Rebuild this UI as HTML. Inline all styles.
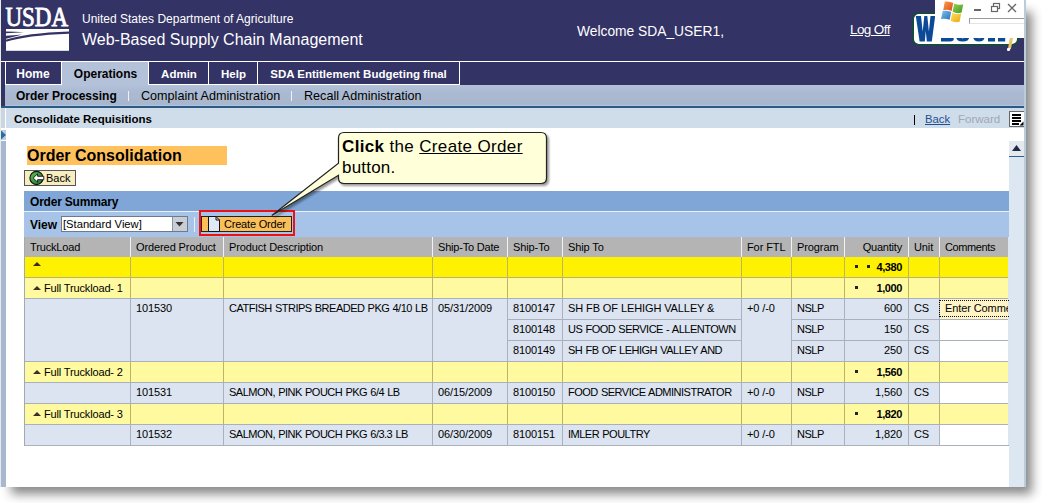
<!DOCTYPE html>
<html><head><meta charset="utf-8">
<style>
*{box-sizing:border-box;margin:0;padding:0}
html,body{width:1042px;height:503px;overflow:hidden;background:#fff;font-family:"Liberation Sans",sans-serif;color:#000}
.a{position:absolute;white-space:nowrap}
#win{position:absolute;left:0;top:0;width:1026px;height:487px;background:#fff;box-shadow:8.5px 9px 10px -2.5px rgba(0,0,0,.47);overflow:hidden}
.hdr{left:1px;top:0;width:1025px;height:61px;background:#333366}
.t{color:#fff}
.tabbar{left:1px;top:61px;width:1025px;height:46px;background:#333366}
.tab{position:absolute;top:62px;height:23px;background:#333366;border-left:1px solid #fff;color:#fff;font-weight:bold;font-size:12px;line-height:24px;text-align:center;border-bottom:1px solid #fff}
.sub{left:5px;top:85px;width:1021px;height:21px;background:linear-gradient(#b3c1d9,#abbbd3 30%,#a9b6cc 95%)}
.subline{left:1px;top:106px;width:1025px;height:2px;background:#2c5a82}
.title{left:5px;top:108px;width:1021px;height:20px;background:#cfdcea}
.lstrip{left:1px;width:4px}
.col{position:absolute;top:237px;height:209px;border-right:1px solid #b9b9b9}
.row{position:absolute;left:25px;width:983px;height:21px;border-bottom:1px solid #c3c3aa}
.cell{position:absolute;font-size:11px;line-height:20px;white-space:nowrap}
</style></head><body>
<div id="win">
  <!-- left frame col -->
  <div class="a" style="left:0;top:0;width:1px;height:487px;background:#e6ebe6"></div>
  <div class="a hdr"></div>
  <!-- USDA logo -->
  <svg class="a" style="left:0;top:0" width="80" height="56" viewBox="0 0 80 56">
    <text x="5.5" y="26.4" font-family="Liberation Serif" font-size="27" fill="#fff" stroke="#fff" stroke-width="0.9" textLength="62.5" lengthAdjust="spacingAndGlyphs">USDA</text>
    <rect x="6" y="29" width="63" height="21.8" fill="#fff"/>
    <path d="M6,31.5 L6,33.2 Q15,33 24,32.3 Q15,31.6 6,31.5 Z" fill="#333366"/>
    <path d="M6,35.8 L6,38.8 Q13,37.2 22,34.6 Q13,35.6 6,35.8 Z" fill="#333366"/>
    <path d="M6,40.8 Q26,34.2 69,32.6" stroke="#333366" stroke-width="2.1" fill="none"/>
  </svg>
  <div class="a t" style="left:82px;top:12px;font-size:12px">United States Department of Agriculture</div>
  <div class="a t" style="left:82px;top:31px;font-size:16px">Web-Based Supply Chain Management</div>
  <div class="a t" style="left:577px;top:24px;font-size:13.8px">Welcome SDA_USER1,</div>
  <div class="a t" style="left:850px;top:22px;font-size:13.5px;letter-spacing:-0.6px;text-decoration:underline">Log Off</div>
  <!-- WBSCM logo -->
  <div class="a" style="left:912px;top:12px;width:107px;height:34px;background:#fff;border:2px solid #174a3c;border-radius:7px"></div>
  <svg class="a" style="left:900px;top:0" width="126" height="56" viewBox="900 0 126 56">
    <path d="M915.8,16 L921,16 L922.7,31.5 L924.3,16 L927.3,16 L928.9,31.5 L930.5,16 L935.2,16 L931.8,41.5 L926.8,41.5 L925.8,31 L924.8,41.5 L919.6,41.5 Z" fill="#0c4a98"/>
    <path d="M941,36 H950 Q953.8,36 953.8,38.8 Q953.8,41.5 950,41.5 H941 Z" fill="#0c4a98"/>
    <path d="M955.8,36 Q956,41.6 962.6,41.6 Q969.6,41.6 969.6,36 H964.6 Q964.4,38.4 962.6,38.4 Q960.9,38.4 960.7,36 Z" fill="#0c4a98"/>
    <path d="M972.8,36 Q973.2,41.6 979,41.6 Q984.2,41.6 984.6,37 L980,36.5 Q979.8,38.4 979,38.4 Q977.8,38.4 977.6,36 Z" fill="#0c4a98"/>
    <path d="M988,36 H995 V41.5 H988 Z M998,36 H1005.2 V41.5 H998 Z" fill="#0c4a98"/>
  </svg>
  <div class="a" style="left:1009px;top:37px;width:2.5px;height:12px;background:#e8c36a;transform:rotate(10deg)"></div>
  <div class="a" style="left:1007px;top:48px;width:3px;height:3px;background:#fff;border-radius:1px"></div>
  <!-- window chrome overlay -->
  <div class="a" style="left:935px;top:0;width:91px;height:38px;background:#fff"></div>
  <svg class="a" style="left:930px;top:0" width="40" height="26" viewBox="930 0 40 26">
    <defs>
      <linearGradient id="wr" x1="0" y1="0" x2="1" y2="1"><stop offset="0" stop-color="#f7a04a"/><stop offset="1" stop-color="#e0481f"/></linearGradient>
      <linearGradient id="wg" x1="0" y1="0" x2="1" y2="1"><stop offset="0" stop-color="#9ad24a"/><stop offset="1" stop-color="#3f9a2a"/></linearGradient>
      <linearGradient id="wb" x1="0" y1="0" x2="1" y2="1"><stop offset="0" stop-color="#7cc4f4"/><stop offset="1" stop-color="#2a6fb4"/></linearGradient>
      <linearGradient id="wy" x1="0" y1="0" x2="1" y2="1"><stop offset="0" stop-color="#ffe05a"/><stop offset="1" stop-color="#e8a818"/></linearGradient>
    </defs>
    <path d="M944.8,1.6 Q949,0.8 953.2,3 L951.6,11 Q947.5,9.2 943.2,10.2 Z" fill="url(#wr)"/>
    <path d="M954.2,3.6 Q958.5,5.6 963.2,4.2 L961.6,12.6 Q957,14 952.6,11.8 Z" fill="url(#wg)"/>
    <path d="M942.8,11 Q947,10 951.2,12 L949.6,19.8 Q945.5,18.2 941,19 Z" fill="url(#wb)"/>
    <path d="M952.2,12.8 Q956.6,15 961.2,13.6 L959.6,21.8 Q955,23 950.6,20.8 Z" fill="url(#wy)"/>
  </svg>
  <div class="a" style="left:974px;top:9px;width:7px;height:2px;background:#666"></div>
  <svg class="a" style="left:990px;top:2px" width="11" height="11" viewBox="0 0 11 11">
    <rect x="3.5" y="1.5" width="6" height="5" fill="none" stroke="#666" stroke-width="1.2"/>
    <rect x="1.5" y="4.5" width="6" height="5" fill="#fff" stroke="#666" stroke-width="1.2"/>
  </svg>
  <svg class="a" style="left:1007px;top:3px" width="10" height="10" viewBox="0 0 10 10">
    <path d="M1,1 L9,9 M9,1 L1,9" stroke="#666" stroke-width="1.3"/>
  </svg>
  <div class="a" style="left:969px;top:18px;width:57px;height:6px;border-top:1px solid #999;border-left:1px solid #999;border-bottom:1px solid #e4e4e4"></div>

  <!-- tab bar -->
  <div class="a tabbar"></div>
  <div class="a" style="left:1px;top:61px;width:1025px;height:1px;background:#fff"></div>
  <div class="a lstrip" style="top:62px;height:46px;background:#333366"></div>
  <div class="a" style="left:5px;top:62px;width:1px;height:44px;background:#fff"></div>
  <div class="tab" style="left:5px;width:57px;padding-right:2px">Home</div>
  <div class="tab" style="left:61px;width:88px;background:#b3c1d9;color:#000;border-bottom:none;height:24px">Operations</div>
  <div class="tab" style="left:148px;width:61px;font-size:11.5px">Admin</div>
  <div class="tab" style="left:208px;width:50px;font-size:11.5px">Help</div>
  <div class="tab" style="left:257px;width:203px;font-size:11.5px;border-right:1px solid #fff">SDA Entitlement Budgeting final</div>
  <div class="a sub"></div>
  <div class="a" style="left:62px;top:84px;width:86px;height:2px;background:#b3c1d9"></div>
  <div class="a" style="left:5px;top:105px;width:1021px;height:1px;background:#a9c6e4"></div>
  <div class="a subline"></div>
  <div class="a" style="left:16px;top:89px;font-size:12px;font-weight:bold">Order Processing</div>
  <div class="a" style="left:128px;top:91px;width:1px;height:10px;background:#eef2f8"></div>
  <div class="a" style="left:141px;top:89px;font-size:12.6px">Complaint Administration</div>
  <div class="a" style="left:291px;top:91px;width:1px;height:10px;background:#eef2f8"></div>
  <div class="a" style="left:304px;top:89px;font-size:12.6px">Recall Administration</div>
  <!-- title bar -->
  <div class="a title"></div>
  <div class="a lstrip" style="top:108px;height:20px;background:#c9d5e3"></div>
  <div class="a" style="left:5px;top:108px;width:1px;height:20px;background:#fff"></div>
  <div class="a" style="left:14px;top:113px;font-size:11.5px;font-weight:bold">Consolidate Requisitions</div>
  <div class="a" style="left:914px;top:115px;width:1px;height:10px;background:#000"></div>
  <div class="a" style="left:925px;top:113px;font-size:11.3px;color:#1d4f91;text-decoration:underline">Back</div>
  <div class="a" style="left:958px;top:113px;font-size:11.5px;color:#a0a8b4">Forward</div>
  <div class="a" style="left:1009px;top:111px;width:17px;height:16px;background:#fff;border:1px solid #666"></div>
  <div class="a" style="left:1012px;top:114px;width:9px;height:1.5px;background:#000"></div>
  <div class="a" style="left:1012px;top:117px;width:9px;height:1.5px;background:#000"></div>
  <div class="a" style="left:1012px;top:120px;width:9px;height:1.5px;background:#000"></div>
  <div class="a" style="left:1012px;top:123px;width:7px;height:1.5px;background:#000"></div>
  <svg class="a" style="left:1019px;top:121px" width="5" height="5" viewBox="0 0 5 5"><path d="M4.5,0.5 L4.5,4.5 L0.5,4.5 Z" fill="#000"/></svg>

  <!-- left strip below -->
  <div class="a" style="left:1px;top:130px;width:5px;height:10px;background:#b9cbe2"></div>
  <svg class="a" style="left:1px;top:130px" width="5" height="10" viewBox="0 0 5 10"><path d="M0,0.5 L5,5 L0,9.5 Z" fill="#2f6aa3"/></svg>
  <div class="a" style="left:1px;top:141px;width:5px;height:346px;background:linear-gradient(90deg,#a6b7d4,#aab8cc)"></div>

  <!-- right scrollbar -->
  <div class="a" style="left:1009px;top:141px;width:15px;height:346px;background:#dce7f2"></div>
  <div class="a" style="left:1009px;top:141px;width:15px;height:15px;background:#e4e9f0"></div>
  <svg class="a" style="left:1009px;top:141px" width="15" height="15" viewBox="0 0 15 15"><path d="M3,10 L12,10 L7.5,4 Z" fill="#222844"/></svg>
  <div class="a" style="left:1009px;top:156px;width:15px;height:1px;background:#2f5f8f"></div>
  <div class="a" style="left:1024px;top:0;width:2px;height:487px;background:#bccade"></div>

  <!-- page title -->
  <div class="a" style="left:27px;top:146px;width:200px;height:19px;background:#ffc15c"></div>
  <div class="a" style="left:27px;top:146px;font-size:16px;font-weight:bold;line-height:19px">Order Consolidation</div>
  <!-- back button -->
  <div class="a" style="left:24px;top:170px;width:52px;height:16px;background:#f8edc0;border:1px solid #555"></div>
  <svg class="a" style="left:29px;top:170px" width="16" height="16" viewBox="0 0 16 16">
    <defs><linearGradient id="gb" x1="0" y1="0" x2="1" y2="1"><stop offset="0" stop-color="#5cc24a"/><stop offset="1" stop-color="#1d6e3a"/></linearGradient></defs>
    <circle cx="7.5" cy="8" r="6.6" fill="url(#gb)" stroke="#111" stroke-width="1.1"/>
    <path d="M4.2,8 L8.6,3.8 L8.6,6.3 L14.8,6.3 L14.8,9.7 L8.6,9.7 L8.6,12.2 Z" fill="#fff" stroke="#111" stroke-width="0.9"/>
  </svg>
  <div class="a" style="left:46px;top:171px;font-size:11px;line-height:14px">Back</div>

  <!-- order summary bar -->
  <div class="a" style="left:24px;top:191px;width:985px;height:20px;background:#7fa6d6"></div>
  <div class="a" style="left:30px;top:195px;font-size:12px;font-weight:bold;letter-spacing:-0.2px">Order Summary</div>
  <div class="a" style="left:24px;top:211px;width:985px;height:1px;background:#e8f0fa"></div>
  <div class="a" style="left:24px;top:212px;width:985px;height:25px;background:#a7c3e7"></div>
  <div class="a" style="left:30px;top:218px;font-size:12px;font-weight:bold">View</div>
  <div class="a" style="left:61px;top:216px;width:127px;height:16px;background:#fff;border:1px solid #6f7a88"></div>
  <div class="a" style="left:172px;top:217px;width:15px;height:14px;background:#c9ced6;border-left:1px solid #8a96a6"></div>
  <svg class="a" style="left:172px;top:217px" width="15" height="14" viewBox="0 0 15 14"><path d="M3.5,5 L11.5,5 L7.5,9.5 Z" fill="#333"/></svg>
  <div class="a" style="left:63px;top:217px;font-size:11.2px;line-height:14px">[Standard View]</div>
  <div class="a" style="left:194px;top:217px;width:1px;height:15px;background:#e8f0fa"></div>
  <!-- red box -->
  <div class="a" style="left:199px;top:210px;width:96px;height:26px;border:2px solid #ee1111"></div>
  <div class="a" style="left:201px;top:216px;width:91px;height:16px;background:#fbbf5a;border:1px solid #222"></div>
  <svg class="a" style="left:207px;top:216px" width="14" height="16" viewBox="0 0 14 16">
    <path d="M1.5,0.5 L9,0.5 L12.5,4 L12.5,15.5 L1.5,15.5 Z" fill="#dfe9f5" stroke="#111" stroke-width="1"/>
    <path d="M9,0.5 L9,4 L12.5,4" fill="none" stroke="#111" stroke-width="1"/>
  </svg>
  <div class="a" style="left:224px;top:217px;font-size:11px;letter-spacing:-0.2px;line-height:14px">Create Order</div>

  <!-- table -->
  <div class="a" style="left:24px;top:237px;width:985px;height:209px;background:#dce6f2;border:1px solid #a4a8b0;border-top:none;border-right:none"></div>
  <div class="a" style="left:25px;top:237px;width:983px;height:20px;background:#b4b4b4"></div>
  <div class="a" style="left:25px;top:237px;width:983px;height:20px;background:#b4b4b4"></div>
<div class="a" style="left:30px;top:237px;height:20px;font-size:11px;line-height:20px;letter-spacing:-0.15px">TruckLoad</div>
<div class="a" style="left:130px;top:237px;width:1px;height:20px;background:#f2f2f2"></div>
<div class="a" style="left:136px;top:237px;height:20px;font-size:11px;line-height:20px;letter-spacing:-0.1px">Ordered Product</div>
<div class="a" style="left:223px;top:237px;width:1px;height:20px;background:#f2f2f2"></div>
<div class="a" style="left:229px;top:237px;height:20px;font-size:11px;line-height:20px;letter-spacing:-0.1px">Product Description</div>
<div class="a" style="left:432px;top:237px;width:1px;height:20px;background:#f2f2f2"></div>
<div class="a" style="left:438px;top:237px;height:20px;font-size:11px;line-height:20px;letter-spacing:-0.2px">Ship-To Date</div>
<div class="a" style="left:507px;top:237px;width:1px;height:20px;background:#f2f2f2"></div>
<div class="a" style="left:513px;top:237px;height:20px;font-size:11px;line-height:20px;letter-spacing:-0.1px">Ship-To</div>
<div class="a" style="left:562px;top:237px;width:1px;height:20px;background:#f2f2f2"></div>
<div class="a" style="left:568px;top:237px;height:20px;font-size:11px;line-height:20px;letter-spacing:-0.1px">Ship To</div>
<div class="a" style="left:741px;top:237px;width:1px;height:20px;background:#f2f2f2"></div>
<div class="a" style="left:747px;top:237px;height:20px;font-size:11px;line-height:20px;letter-spacing:-0.1px">For FTL</div>
<div class="a" style="left:791px;top:237px;width:1px;height:20px;background:#f2f2f2"></div>
<div class="a" style="left:797px;top:237px;height:20px;font-size:11px;line-height:20px;letter-spacing:-0.1px">Program</div>
<div class="a" style="left:844px;top:237px;width:1px;height:20px;background:#f2f2f2"></div>
<div class="a" style="left:845px;top:237px;width:57px;height:20px;font-size:11px;line-height:20px;text-align:right;letter-spacing:-0.2px">Quantity</div>
<div class="a" style="left:908px;top:237px;width:1px;height:20px;background:#f2f2f2"></div>
<div class="a" style="left:914px;top:237px;height:20px;font-size:11px;line-height:20px;letter-spacing:-0.1px">Unit</div>
<div class="a" style="left:939px;top:237px;width:1px;height:20px;background:#f2f2f2"></div>
<div class="a" style="left:945px;top:237px;height:20px;font-size:11px;line-height:20px;letter-spacing:-0.4px">Comments</div>
<div class="a" style="left:25px;top:257px;width:983px;height:21px;background:#fff200"></div>
<div class="a" style="left:25px;top:277px;width:983px;height:1px;background:#bdb36a"></div>
<div class="a" style="left:130px;top:257px;width:1px;height:20px;background:#bdb36a"></div>
<div class="a" style="left:223px;top:257px;width:1px;height:20px;background:#bdb36a"></div>
<div class="a" style="left:432px;top:257px;width:1px;height:20px;background:#bdb36a"></div>
<div class="a" style="left:507px;top:257px;width:1px;height:20px;background:#bdb36a"></div>
<div class="a" style="left:562px;top:257px;width:1px;height:20px;background:#bdb36a"></div>
<div class="a" style="left:741px;top:257px;width:1px;height:20px;background:#bdb36a"></div>
<div class="a" style="left:791px;top:257px;width:1px;height:20px;background:#bdb36a"></div>
<div class="a" style="left:844px;top:257px;width:1px;height:20px;background:#bdb36a"></div>
<div class="a" style="left:908px;top:257px;width:1px;height:20px;background:#bdb36a"></div>
<div class="a" style="left:939px;top:257px;width:1px;height:20px;background:#bdb36a"></div>
<div class="a" style="left:25px;top:278px;width:983px;height:21px;background:#fffa9f"></div>
<div class="a" style="left:25px;top:298px;width:983px;height:1px;background:#a9b1bd"></div>
<div class="a" style="left:130px;top:278px;width:1px;height:20px;background:#bdb36a"></div>
<div class="a" style="left:223px;top:278px;width:1px;height:20px;background:#bdb36a"></div>
<div class="a" style="left:432px;top:278px;width:1px;height:20px;background:#bdb36a"></div>
<div class="a" style="left:507px;top:278px;width:1px;height:20px;background:#bdb36a"></div>
<div class="a" style="left:562px;top:278px;width:1px;height:20px;background:#bdb36a"></div>
<div class="a" style="left:741px;top:278px;width:1px;height:20px;background:#bdb36a"></div>
<div class="a" style="left:791px;top:278px;width:1px;height:20px;background:#bdb36a"></div>
<div class="a" style="left:844px;top:278px;width:1px;height:20px;background:#bdb36a"></div>
<div class="a" style="left:908px;top:278px;width:1px;height:20px;background:#bdb36a"></div>
<div class="a" style="left:939px;top:278px;width:1px;height:20px;background:#bdb36a"></div>
<div class="a" style="left:25px;top:299px;width:983px;height:21px;background:#dbe4f0"></div>
<div class="a" style="left:507px;top:319px;width:55px;height:1px;background:#a9b1bd"></div>
<div class="a" style="left:562px;top:319px;width:179px;height:1px;background:#a9b1bd"></div>
<div class="a" style="left:791px;top:319px;width:53px;height:1px;background:#a9b1bd"></div>
<div class="a" style="left:844px;top:319px;width:64px;height:1px;background:#a9b1bd"></div>
<div class="a" style="left:908px;top:319px;width:31px;height:1px;background:#a9b1bd"></div>
<div class="a" style="left:939px;top:319px;width:69px;height:1px;background:#a9b1bd"></div>
<div class="a" style="left:130px;top:299px;width:1px;height:21px;background:#a9b1bd"></div>
<div class="a" style="left:223px;top:299px;width:1px;height:21px;background:#a9b1bd"></div>
<div class="a" style="left:432px;top:299px;width:1px;height:21px;background:#a9b1bd"></div>
<div class="a" style="left:507px;top:299px;width:1px;height:21px;background:#a9b1bd"></div>
<div class="a" style="left:562px;top:299px;width:1px;height:21px;background:#a9b1bd"></div>
<div class="a" style="left:741px;top:299px;width:1px;height:21px;background:#a9b1bd"></div>
<div class="a" style="left:791px;top:299px;width:1px;height:21px;background:#a9b1bd"></div>
<div class="a" style="left:844px;top:299px;width:1px;height:21px;background:#a9b1bd"></div>
<div class="a" style="left:908px;top:299px;width:1px;height:21px;background:#a9b1bd"></div>
<div class="a" style="left:939px;top:299px;width:1px;height:21px;background:#a9b1bd"></div>
<div class="a" style="left:25px;top:320px;width:983px;height:21px;background:#dbe4f0"></div>
<div class="a" style="left:507px;top:340px;width:55px;height:1px;background:#a9b1bd"></div>
<div class="a" style="left:562px;top:340px;width:179px;height:1px;background:#a9b1bd"></div>
<div class="a" style="left:791px;top:340px;width:53px;height:1px;background:#a9b1bd"></div>
<div class="a" style="left:844px;top:340px;width:64px;height:1px;background:#a9b1bd"></div>
<div class="a" style="left:908px;top:340px;width:31px;height:1px;background:#a9b1bd"></div>
<div class="a" style="left:939px;top:340px;width:69px;height:1px;background:#a9b1bd"></div>
<div class="a" style="left:130px;top:320px;width:1px;height:21px;background:#a9b1bd"></div>
<div class="a" style="left:223px;top:320px;width:1px;height:21px;background:#a9b1bd"></div>
<div class="a" style="left:432px;top:320px;width:1px;height:21px;background:#a9b1bd"></div>
<div class="a" style="left:507px;top:320px;width:1px;height:21px;background:#a9b1bd"></div>
<div class="a" style="left:562px;top:320px;width:1px;height:21px;background:#a9b1bd"></div>
<div class="a" style="left:741px;top:320px;width:1px;height:21px;background:#a9b1bd"></div>
<div class="a" style="left:791px;top:320px;width:1px;height:21px;background:#a9b1bd"></div>
<div class="a" style="left:844px;top:320px;width:1px;height:21px;background:#a9b1bd"></div>
<div class="a" style="left:908px;top:320px;width:1px;height:21px;background:#a9b1bd"></div>
<div class="a" style="left:939px;top:320px;width:1px;height:21px;background:#a9b1bd"></div>
<div class="a" style="left:25px;top:341px;width:983px;height:21px;background:#dbe4f0"></div>
<div class="a" style="left:25px;top:361px;width:983px;height:1px;background:#a9b1bd"></div>
<div class="a" style="left:130px;top:341px;width:1px;height:21px;background:#a9b1bd"></div>
<div class="a" style="left:223px;top:341px;width:1px;height:21px;background:#a9b1bd"></div>
<div class="a" style="left:432px;top:341px;width:1px;height:21px;background:#a9b1bd"></div>
<div class="a" style="left:507px;top:341px;width:1px;height:21px;background:#a9b1bd"></div>
<div class="a" style="left:562px;top:341px;width:1px;height:21px;background:#a9b1bd"></div>
<div class="a" style="left:741px;top:341px;width:1px;height:21px;background:#a9b1bd"></div>
<div class="a" style="left:791px;top:341px;width:1px;height:21px;background:#a9b1bd"></div>
<div class="a" style="left:844px;top:341px;width:1px;height:21px;background:#a9b1bd"></div>
<div class="a" style="left:908px;top:341px;width:1px;height:21px;background:#a9b1bd"></div>
<div class="a" style="left:939px;top:341px;width:1px;height:21px;background:#a9b1bd"></div>
<div class="a" style="left:25px;top:362px;width:983px;height:21px;background:#fffa9f"></div>
<div class="a" style="left:25px;top:382px;width:983px;height:1px;background:#a9b1bd"></div>
<div class="a" style="left:130px;top:362px;width:1px;height:20px;background:#bdb36a"></div>
<div class="a" style="left:223px;top:362px;width:1px;height:20px;background:#bdb36a"></div>
<div class="a" style="left:432px;top:362px;width:1px;height:20px;background:#bdb36a"></div>
<div class="a" style="left:507px;top:362px;width:1px;height:20px;background:#bdb36a"></div>
<div class="a" style="left:562px;top:362px;width:1px;height:20px;background:#bdb36a"></div>
<div class="a" style="left:741px;top:362px;width:1px;height:20px;background:#bdb36a"></div>
<div class="a" style="left:791px;top:362px;width:1px;height:20px;background:#bdb36a"></div>
<div class="a" style="left:844px;top:362px;width:1px;height:20px;background:#bdb36a"></div>
<div class="a" style="left:908px;top:362px;width:1px;height:20px;background:#bdb36a"></div>
<div class="a" style="left:939px;top:362px;width:1px;height:20px;background:#bdb36a"></div>
<div class="a" style="left:25px;top:383px;width:983px;height:21px;background:#dbe4f0"></div>
<div class="a" style="left:25px;top:403px;width:983px;height:1px;background:#a9b1bd"></div>
<div class="a" style="left:130px;top:383px;width:1px;height:21px;background:#a9b1bd"></div>
<div class="a" style="left:223px;top:383px;width:1px;height:21px;background:#a9b1bd"></div>
<div class="a" style="left:432px;top:383px;width:1px;height:21px;background:#a9b1bd"></div>
<div class="a" style="left:507px;top:383px;width:1px;height:21px;background:#a9b1bd"></div>
<div class="a" style="left:562px;top:383px;width:1px;height:21px;background:#a9b1bd"></div>
<div class="a" style="left:741px;top:383px;width:1px;height:21px;background:#a9b1bd"></div>
<div class="a" style="left:791px;top:383px;width:1px;height:21px;background:#a9b1bd"></div>
<div class="a" style="left:844px;top:383px;width:1px;height:21px;background:#a9b1bd"></div>
<div class="a" style="left:908px;top:383px;width:1px;height:21px;background:#a9b1bd"></div>
<div class="a" style="left:939px;top:383px;width:1px;height:21px;background:#a9b1bd"></div>
<div class="a" style="left:25px;top:404px;width:983px;height:21px;background:#fffa9f"></div>
<div class="a" style="left:25px;top:424px;width:983px;height:1px;background:#a9b1bd"></div>
<div class="a" style="left:130px;top:404px;width:1px;height:20px;background:#bdb36a"></div>
<div class="a" style="left:223px;top:404px;width:1px;height:20px;background:#bdb36a"></div>
<div class="a" style="left:432px;top:404px;width:1px;height:20px;background:#bdb36a"></div>
<div class="a" style="left:507px;top:404px;width:1px;height:20px;background:#bdb36a"></div>
<div class="a" style="left:562px;top:404px;width:1px;height:20px;background:#bdb36a"></div>
<div class="a" style="left:741px;top:404px;width:1px;height:20px;background:#bdb36a"></div>
<div class="a" style="left:791px;top:404px;width:1px;height:20px;background:#bdb36a"></div>
<div class="a" style="left:844px;top:404px;width:1px;height:20px;background:#bdb36a"></div>
<div class="a" style="left:908px;top:404px;width:1px;height:20px;background:#bdb36a"></div>
<div class="a" style="left:939px;top:404px;width:1px;height:20px;background:#bdb36a"></div>
<div class="a" style="left:25px;top:425px;width:983px;height:21px;background:#dbe4f0"></div>
<div class="a" style="left:25px;top:445px;width:983px;height:1px;background:#a9b1bd"></div>
<div class="a" style="left:130px;top:425px;width:1px;height:21px;background:#a9b1bd"></div>
<div class="a" style="left:223px;top:425px;width:1px;height:21px;background:#a9b1bd"></div>
<div class="a" style="left:432px;top:425px;width:1px;height:21px;background:#a9b1bd"></div>
<div class="a" style="left:507px;top:425px;width:1px;height:21px;background:#a9b1bd"></div>
<div class="a" style="left:562px;top:425px;width:1px;height:21px;background:#a9b1bd"></div>
<div class="a" style="left:741px;top:425px;width:1px;height:21px;background:#a9b1bd"></div>
<div class="a" style="left:791px;top:425px;width:1px;height:21px;background:#a9b1bd"></div>
<div class="a" style="left:844px;top:425px;width:1px;height:21px;background:#a9b1bd"></div>
<div class="a" style="left:908px;top:425px;width:1px;height:21px;background:#a9b1bd"></div>
<div class="a" style="left:939px;top:425px;width:1px;height:21px;background:#a9b1bd"></div>
<div class="a" style="left:33px;top:262px;width:0;height:0;border-left:4px solid transparent;border-right:4px solid transparent;border-bottom:4px solid #3a2e28"></div>
<div class="a" style="left:855px;top:265px;width:3px;height:3px;background:#222"></div>
<div class="a" style="left:867px;top:265px;width:3px;height:3px;background:#222"></div>
<div class="a" style="left:845px;top:257px;width:57px;font-size:11px;font-weight:bold;line-height:20px;text-align:right;letter-spacing:-0.4px">4,380</div>
<div class="a" style="left:33px;top:286px;width:0;height:0;border-left:4px solid transparent;border-right:4px solid transparent;border-bottom:4px solid #3a2e28"></div>
<div class="a" style="left:44px;top:278px;font-size:11px;line-height:20px;letter-spacing:-0.15px">Full Truckload- 1</div>
<div class="a" style="left:855px;top:286px;width:3px;height:3px;background:#222"></div>
<div class="a" style="left:845px;top:278px;width:57px;font-size:11px;font-weight:bold;line-height:20px;text-align:right;letter-spacing:-0.4px">1,000</div>
<div class="a" style="left:136px;top:298px;font-size:11px;line-height:20px;letter-spacing:-0.1px;word-spacing:0px">101530</div>
<div class="a" style="left:229px;top:298px;font-size:11px;line-height:20px;letter-spacing:-0.5px;word-spacing:0.6px">CATFISH STRIPS BREADED PKG 4/10 LB</div>
<div class="a" style="left:438px;top:298px;font-size:11px;line-height:20px;letter-spacing:-0.1px;word-spacing:0px">05/31/2009</div>
<div class="a" style="left:513px;top:298px;font-size:11px;line-height:20px;letter-spacing:-0.1px;word-spacing:0px">8100147</div>
<div class="a" style="left:568px;top:298px;font-size:11px;line-height:20px;letter-spacing:-0.1px;word-spacing:0px">SH FB OF LEHIGH VALLEY &amp;</div>
<div class="a" style="left:747px;top:298px;font-size:11px;line-height:20px;letter-spacing:-0.1px;word-spacing:0px">+0 /-0</div>
<div class="a" style="left:797px;top:298px;font-size:11px;line-height:20px;letter-spacing:-0.5px;word-spacing:0.6px">NSLP</div>
<div class="a" style="left:845px;top:298px;width:57px;font-size:11px;line-height:20px;text-align:right;letter-spacing:-0.1px">600</div>
<div class="a" style="left:914px;top:298px;font-size:11px;line-height:20px;letter-spacing:-0.1px;word-spacing:0px">CS</div>
<div class="a" style="left:940px;top:299px;width:68px;height:20px;background:#fff4c6"></div>
<div class="a" style="left:939px;top:300px;width:70px;height:17px;border:1px dotted #111;border-right:none"></div>
<div class="a" style="left:945px;top:298px;width:63px;overflow:hidden;font-size:11px;line-height:20px;letter-spacing:-0.1px">Enter Comments</div>
<div class="a" style="left:513px;top:319px;font-size:11px;line-height:20px;letter-spacing:-0.1px;word-spacing:0px">8100148</div>
<div class="a" style="left:568px;top:319px;font-size:11px;line-height:20px;letter-spacing:-0.5px;word-spacing:0.6px">US FOOD SERVICE - ALLENTOWN</div>
<div class="a" style="left:797px;top:319px;font-size:11px;line-height:20px;letter-spacing:-0.5px;word-spacing:0.6px">NSLP</div>
<div class="a" style="left:845px;top:319px;width:57px;font-size:11px;line-height:20px;text-align:right;letter-spacing:-0.1px">150</div>
<div class="a" style="left:914px;top:319px;font-size:11px;line-height:20px;letter-spacing:-0.1px;word-spacing:0px">CS</div>
<div class="a" style="left:940px;top:320px;width:68px;height:20px;background:#fff"></div>
<div class="a" style="left:513px;top:340px;font-size:11px;line-height:20px;letter-spacing:-0.1px;word-spacing:0px">8100149</div>
<div class="a" style="left:568px;top:340px;font-size:11px;line-height:20px;letter-spacing:-0.5px;word-spacing:0.6px">SH FB OF LEHIGH VALLEY AND</div>
<div class="a" style="left:797px;top:340px;font-size:11px;line-height:20px;letter-spacing:-0.5px;word-spacing:0.6px">NSLP</div>
<div class="a" style="left:845px;top:340px;width:57px;font-size:11px;line-height:20px;text-align:right;letter-spacing:-0.1px">250</div>
<div class="a" style="left:914px;top:340px;font-size:11px;line-height:20px;letter-spacing:-0.1px;word-spacing:0px">CS</div>
<div class="a" style="left:940px;top:341px;width:68px;height:20px;background:#fff"></div>
<div class="a" style="left:33px;top:370px;width:0;height:0;border-left:4px solid transparent;border-right:4px solid transparent;border-bottom:4px solid #3a2e28"></div>
<div class="a" style="left:44px;top:362px;font-size:11px;line-height:20px;letter-spacing:-0.15px">Full Truckload- 2</div>
<div class="a" style="left:855px;top:370px;width:3px;height:3px;background:#222"></div>
<div class="a" style="left:845px;top:362px;width:57px;font-size:11px;font-weight:bold;line-height:20px;text-align:right;letter-spacing:-0.4px">1,560</div>
<div class="a" style="left:136px;top:382px;font-size:11px;line-height:20px;letter-spacing:-0.1px;word-spacing:0px">101531</div>
<div class="a" style="left:229px;top:382px;font-size:11px;line-height:20px;letter-spacing:-0.5px;word-spacing:0.6px">SALMON, PINK POUCH PKG 6/4 LB</div>
<div class="a" style="left:438px;top:382px;font-size:11px;line-height:20px;letter-spacing:-0.1px;word-spacing:0px">06/15/2009</div>
<div class="a" style="left:513px;top:382px;font-size:11px;line-height:20px;letter-spacing:-0.1px;word-spacing:0px">8100150</div>
<div class="a" style="left:568px;top:382px;font-size:11px;line-height:20px;letter-spacing:-0.5px;word-spacing:0.6px">FOOD SERVICE ADMINISTRATOR</div>
<div class="a" style="left:747px;top:382px;font-size:11px;line-height:20px;letter-spacing:-0.1px;word-spacing:0px">+0 /-0</div>
<div class="a" style="left:797px;top:382px;font-size:11px;line-height:20px;letter-spacing:-0.5px;word-spacing:0.6px">NSLP</div>
<div class="a" style="left:845px;top:382px;width:57px;font-size:11px;line-height:20px;text-align:right;letter-spacing:-0.1px">1,560</div>
<div class="a" style="left:914px;top:382px;font-size:11px;line-height:20px;letter-spacing:-0.1px;word-spacing:0px">CS</div>
<div class="a" style="left:940px;top:383px;width:68px;height:20px;background:#fff"></div>
<div class="a" style="left:33px;top:412px;width:0;height:0;border-left:4px solid transparent;border-right:4px solid transparent;border-bottom:4px solid #3a2e28"></div>
<div class="a" style="left:44px;top:404px;font-size:11px;line-height:20px;letter-spacing:-0.15px">Full Truckload- 3</div>
<div class="a" style="left:855px;top:412px;width:3px;height:3px;background:#222"></div>
<div class="a" style="left:845px;top:404px;width:57px;font-size:11px;font-weight:bold;line-height:20px;text-align:right;letter-spacing:-0.4px">1,820</div>
<div class="a" style="left:136px;top:424px;font-size:11px;line-height:20px;letter-spacing:-0.1px;word-spacing:0px">101532</div>
<div class="a" style="left:229px;top:424px;font-size:11px;line-height:20px;letter-spacing:-0.5px;word-spacing:0.6px">SALMON, PINK POUCH PKG 6/3.3 LB</div>
<div class="a" style="left:438px;top:424px;font-size:11px;line-height:20px;letter-spacing:-0.1px;word-spacing:0px">06/30/2009</div>
<div class="a" style="left:513px;top:424px;font-size:11px;line-height:20px;letter-spacing:-0.1px;word-spacing:0px">8100151</div>
<div class="a" style="left:568px;top:424px;font-size:11px;line-height:20px;letter-spacing:-0.5px;word-spacing:0.6px">IMLER POULTRY</div>
<div class="a" style="left:747px;top:424px;font-size:11px;line-height:20px;letter-spacing:-0.1px;word-spacing:0px">+0 /-0</div>
<div class="a" style="left:797px;top:424px;font-size:11px;line-height:20px;letter-spacing:-0.5px;word-spacing:0.6px">NSLP</div>
<div class="a" style="left:845px;top:424px;width:57px;font-size:11px;line-height:20px;text-align:right;letter-spacing:-0.1px">1,820</div>
<div class="a" style="left:914px;top:424px;font-size:11px;line-height:20px;letter-spacing:-0.1px;word-spacing:0px">CS</div>
<div class="a" style="left:940px;top:425px;width:68px;height:20px;background:#fff"></div>
  <!-- callout -->
  <svg class="a" style="left:0;top:0" width="1042" height="503" viewBox="0 0 1042 503">
    <defs><filter id="sh" x="-10%" y="-10%" width="130%" height="130%"><feGaussianBlur in="SourceAlpha" stdDeviation="1"/><feOffset dx="1.5" dy="1.5"/><feComponentTransfer><feFuncA type="linear" slope="0.4"/></feComponentTransfer><feMerge><feMergeNode/><feMergeNode in="SourceGraphic"/></feMerge></filter></defs>
    <path filter="url(#sh)" d="M344,132.5 H541 Q546.5,132.5 546.5,138 V178 Q546.5,183.5 541,183.5 H344 Q338.5,183.5 338.5,178 V175.2 L271.8,215.5 L338.5,163.3 V138 Q338.5,132.5 344,132.5 Z" fill="#ffffd9" stroke="#222" stroke-width="1.2"/>
  </svg>
  <div class="a" style="left:342px;top:137px;font-size:17px;letter-spacing:0.35px;line-height:20px"><b>Click</b> the <u>Create Order</u></div>
  <div class="a" style="left:342px;top:158px;font-size:17px;letter-spacing:0.2px;line-height:20px">button.</div>
</div>
</body></html>
